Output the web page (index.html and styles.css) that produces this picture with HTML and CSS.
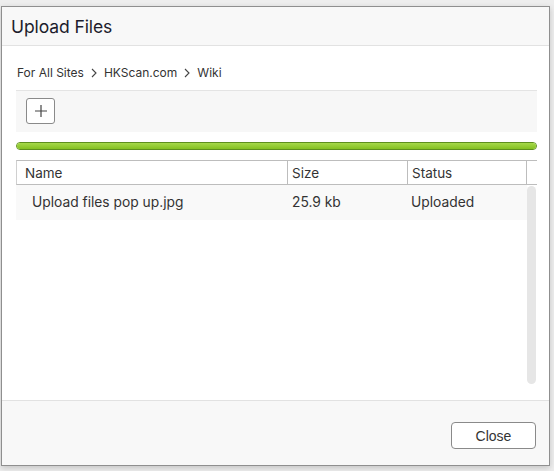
FILE: index.html
```html
<!DOCTYPE html>
<html>
<head>
<meta charset="utf-8">
<link rel="stylesheet" href="styles.css">
</head>
<body>
<div class="backdrop">
  <div class="dialog">
    <div class="dlg-header">Upload Files</div>
    <div class="dlg-body">
      <div class="crumbs">
        <span>For All Sites</span>
        <svg class="chev" width="8" height="10" viewBox="0 0 8 10"><path d="M2 1 L6 5 L2 9" fill="none" stroke="#444" stroke-width="1.1"/></svg>
        <span>HKScan.com</span>
        <svg class="chev" width="8" height="10" viewBox="0 0 8 10"><path d="M2 1 L6 5 L2 9" fill="none" stroke="#444" stroke-width="1.1"/></svg>
        <span>Wiki</span>
      </div>
      <div class="toolbar">
        <button class="add-btn" aria-label="Add">
          <svg width="14" height="14" viewBox="0 0 14 14"><path d="M7 1 V13 M1 7 H13" stroke="#444" stroke-width="1.2"/></svg>
        </button>
      </div>
      <div class="progress"><div class="progress-fill"></div></div>
      <div class="grid">
        <div class="grid-head">
          <div class="col c-name">Name</div>
          <div class="col c-size">Size</div>
          <div class="col c-status">Status</div>
          <div class="col c-pad"></div>
        </div>
        <div class="grid-body">
          <div class="rows">
            <div class="row">
              <div class="cell c-name">Upload files pop up.jpg</div>
              <div class="cell c-size">25.9 kb</div>
              <div class="cell c-status">Uploaded</div>
            </div>
          </div>
          <div class="scrollbar"><div class="thumb"></div></div>
        </div>
      </div>
    </div>
    <div class="dlg-footer">
      <button class="close-btn">Close</button>
    </div>
  </div>
</div>
</body>
</html>
```

FILE: styles.css
```css
* { box-sizing: border-box; }
html, body { margin: 0; padding: 0; }
body {
  width: 554px;
  height: 471px;
  background: #eeeeee;
  font-family: Inter, "Liberation Sans", Arial, sans-serif;
  color: #333;
  overflow: hidden;
}
.backdrop {
  padding: 6px 0 0 1px;
}
.dialog {
  width: 549px;
  height: 460px;
  border: 1px solid #8f8f8f;
  background: #fff;
  box-shadow: 0 2px 6px rgba(0,0,0,0.18);
  display: flex;
  flex-direction: column;
}
.dlg-header {
  height: 39px;
  background: #f8f8f8;
  border-bottom: 1px solid #e2e2e2;
  font-size: 17.5px;
  color: #1c1c2c;
  padding: 9px 0 0 9px;
  letter-spacing: -0.1px;
}
.dlg-body {
  flex: 1;
  padding: 0 12px 0 14px;
  display: flex;
  flex-direction: column;
}
.crumbs {
  height: 44px;
  display: flex;
  align-items: center;
  font-size: 12px;
  color: #333;
  padding-top: 9px;
  padding-left: 1px;
}
.chev { margin: 0 6px 0 6px; }
.toolbar {
  height: 42px;
  background: #f7f7f7;
  border-top: 1px solid #e4e4e4;
  padding: 7px 0 0 10px;
}
.add-btn {
  width: 29px;
  height: 26px;
  border: 1px solid #8a8a8a;
  border-radius: 3px;
  background: #fff;
  display: flex;
  align-items: center;
  justify-content: center;
  padding: 0;
}
.progress {
  margin-top: 10px;
  height: 8px;
  border: 1px solid #5e8f1e;
  border-radius: 4px;
  background: #8ccb2c;
  overflow: hidden;
}
.progress-fill {
  height: 100%;
  background: linear-gradient(#a6d94a, #84c022);
}
.grid {
  margin-top: 10px;
  flex: 1;
  display: flex;
  flex-direction: column;
  margin-bottom: 15px;
}
.grid-head {
  display: flex;
  height: 25px;
  border-top: 1px solid #bdbdbd;
  border-bottom: 1px solid #bdbdbd;
  border-left: 1px solid #d0d0d0;
  font-size: 13.5px;
  color: #333;
}
.col {
  padding: 4px 0 0 4px;
  border-right: 1px solid #bdbdbd;
}
.grid-head .c-name { width: 271px; padding-left: 8px; }
.grid-head .c-size { width: 120px; }
.grid-head .c-status { width: 119px; }
.c-pad { flex: 1; border-right: none; }
.grid-body {
  flex: 1;
  display: flex;
  background: #fff;
}
.rows { flex: 1; }
.row {
  display: flex;
  height: 35px;
  background: #f9f9f9;
  font-size: 13.8px;
  color: #333;
}
.cell { padding: 9px 0 0 4px; }
.row .c-name { width: 272px; padding-left: 16px; }
.row .c-size { width: 120px; }
.row .c-status { width: 118px; padding-left: 3px; }
.scrollbar {
  width: 10px;
  padding: 1px 0;
}
.thumb {
  width: 9px;
  height: 198px;
  background: #e6e6e6;
  border-radius: 5px;
}
.dlg-footer {
  height: 65px;
  background: #f8f8f8;
  border-top: 1px solid #e2e2e2;
  display: flex;
  justify-content: flex-end;
  align-items: flex-start;
  padding: 21px 13px 0 0;
}
.close-btn {
  width: 85px;
  height: 27px;
  border: 1px solid #8a8a8a;
  border-radius: 4px;
  background: #fff;
  font-family: "Liberation Sans", Arial, sans-serif;
  font-size: 14px;
  color: #333;
  padding: 0;
}
```
